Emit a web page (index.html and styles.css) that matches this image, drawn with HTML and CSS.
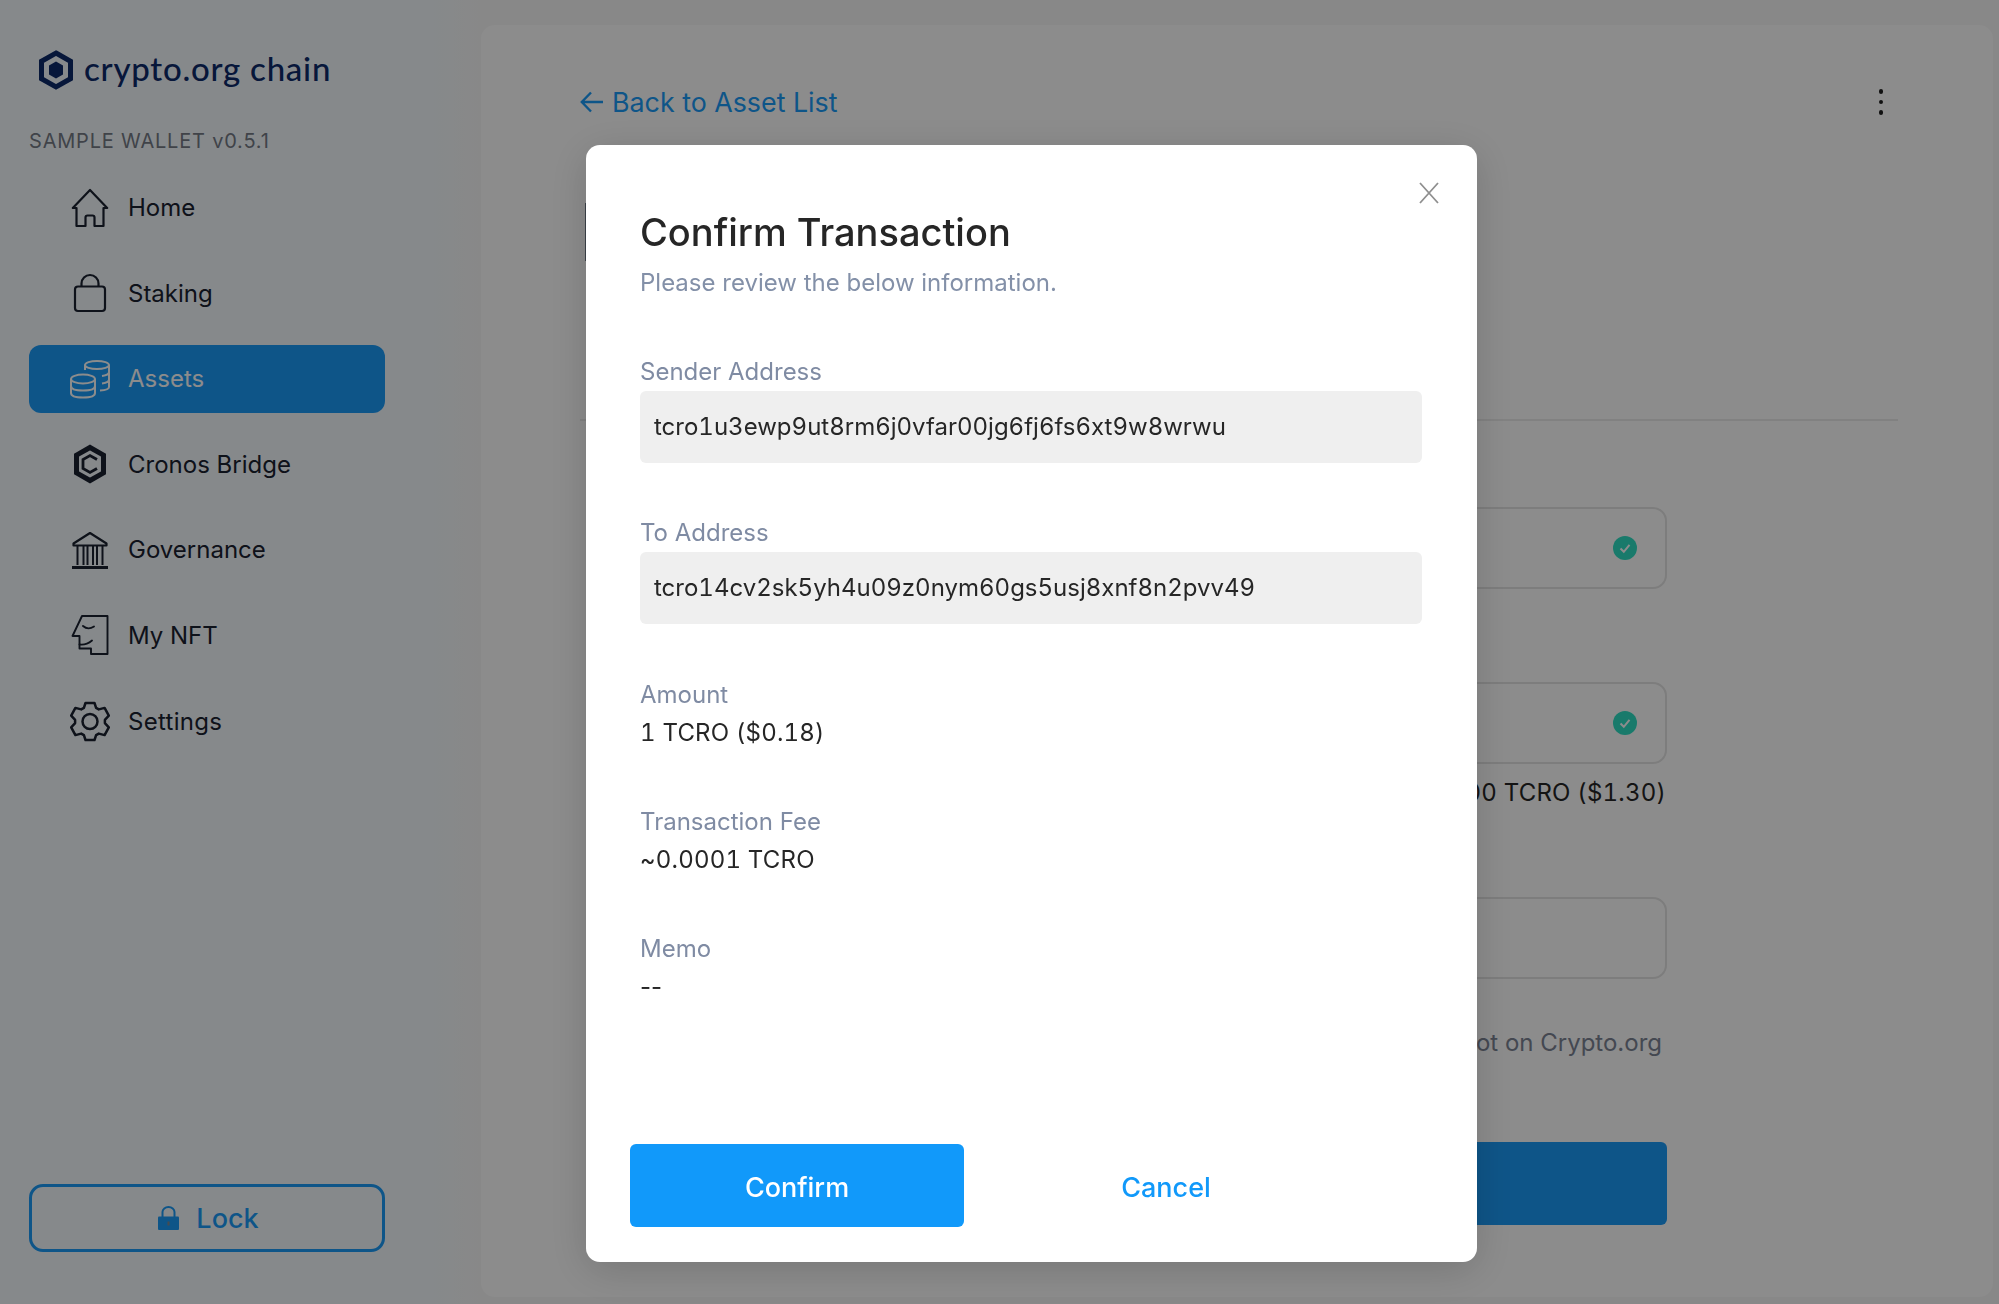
FILE: index.html
```html
<!DOCTYPE html>
<html lang="en">
<head>
<meta charset="utf-8">
<title>Crypto.org Chain Sample Wallet</title>
<link rel="stylesheet" href="styles.css">
</head>
<body>
<div class="app">
  <aside class="sidebar">
    <div class="logo">
      <svg class="logo-mark" viewBox="0 0 36 40" width="36" height="40"><path d="M18 3 32.500 11.200V28.800L18 37 3.500 28.800V11.200Z" fill="none" stroke="#0d2a6b" stroke-width="5"/><path d="M18 11.500 25 15.500V24.500L18 28.500 11 24.500V15.500Z" fill="#0d2a6b"/></svg>
      <span class="logo-text">crypto.org chain</span>
    </div>
    <div class="version">SAMPLE WALLET v0.5.1</div>
    <nav class="nav">
      <a class="nav-item">
        <svg class="nav-icon" viewBox="0 0 38 40" width="38" height="40"><path d="M19 2 1.800 20H5.500V38H14.500V29.500Q14.500 27.500 16.500 27.500H21.500Q23.500 27.500 23.500 29.500V38H32.500V20H36.200Z" fill="none" stroke="currentColor" stroke-width="2.200" stroke-linejoin="round"/></svg>
        <span>Home</span>
      </a>
      <a class="nav-item">
        <svg class="nav-icon" viewBox="0 0 38 40" width="38" height="40"><rect x="4" y="13.500" width="30" height="24.500" rx="3" fill="none" stroke="currentColor" stroke-width="2.200"/><path d="M10.500 13.500V10.500A8.500 8.500 0 0 1 27.500 10.500V13.500" fill="none" stroke="currentColor" stroke-width="2.200"/></svg>
        <span>Staking</span>
      </a>
      <a class="nav-item nav-item-active">
        <svg class="nav-icon nav-icon-coins" viewBox="0 0 42 40" width="42" height="40"><g fill="none" stroke="currentColor" stroke-width="2"><ellipse cx="28" cy="6" rx="12" ry="4"/><path d="M16 6V11M40 6V28Q40 31 31 31.500M40 13Q40 16 33 17M40 20.500Q40 23.500 33 24.500"/><ellipse cx="14" cy="20" rx="12" ry="4.500"/><path d="M2 20V34Q2 38.500 14 38.500T26 34V20M2 27Q2 31.500 14 31.500T26 27"/></g></svg>
        <span>Assets</span>
      </a>
      <a class="nav-item">
        <svg class="nav-icon" viewBox="0 0 38 40" width="38" height="40"><path d="M19 3.500 32.500 11.200V28.800L19 36.500 5.500 28.800V11.200Z" fill="none" stroke="currentColor" stroke-width="5"/><path d="M26 15.500 19 11.500 12 15.500V24.500L19 28.500 26 24.500" fill="none" stroke="currentColor" stroke-width="2.800"/></svg>
        <span>Cronos Bridge</span>
      </a>
      <a class="nav-item">
        <svg class="nav-icon" viewBox="0 0 38 40" width="38" height="40"><g fill="none" stroke="currentColor"><path d="M19 3 2.500 13.500V15.500H35.500V13.500Z" stroke-width="2.200" stroke-linejoin="round"/><path d="M6.500 16V35M12.500 16V35M16.500 16V35M22 16V35M26 16V35M31.500 16V35" stroke-width="2"/><path d="M1 37.500H37" stroke-width="3.200"/></g></svg>
        <span>Governance</span>
      </a>
      <a class="nav-item">
        <svg class="nav-icon" viewBox="0 0 38 40" width="38" height="40"><g fill="none" stroke="currentColor" stroke-width="1.900" stroke-linejoin="round" stroke-linecap="round"><path d="M36.500 1H11L1.500 21H8.500V33.500H20V39H36.500Z"/><path d="M12 11Q17 15.500 23 11.500"/><path d="M8.500 29.500Q15 30.500 21 25.500"/></g></svg>
        <span>My NFT</span>
      </a>
      <a class="nav-item">
        <svg class="nav-icon nav-icon-gear" viewBox="0 0 40 40" width="40" height="41"><g fill="none" stroke="currentColor" stroke-width="2.500" stroke-linejoin="round"><path d="M15.500 1.500H24.500L26.100 6.300 28.800 7.900 34.600 6.400 38.800 14.200 34.900 18.400V21.600L38.800 25.800 34.600 33.600 28.800 32.100 26.100 33.700 24.500 38.500H15.500L13.900 33.700 11.200 32.100 5.400 33.600 1.200 25.800 5.100 21.600V18.400L1.200 14.200 5.400 6.400 11.200 7.900 13.900 6.300Z"/><circle cx="20" cy="20" r="7.500"/></g></svg>
        <span class="nav-label-wide">Settings</span>
      </a>
    </nav>
    <button class="lock-button">
      <svg class="lock-icon" viewBox="0 0 21 24" width="21" height="24"><path d="M4.500 11V6A6 5 0 0 1 16.500 6V11" fill="none" stroke="currentColor" stroke-width="2"/><rect y="10.500" width="21" height="13.500" rx="1" fill="currentColor"/><rect x="9.500" y="15.500" width="2" height="4" fill="#86898c"/></svg>
      <span>Lock</span>
    </button>
  </aside>

  <main class="main">
    <section class="panel">
      <header class="panel-head">
        <a class="back-link">
          <svg class="back-arrow" viewBox="0 0 24 24" width="24" height="24"><path d="M23 12H2M11 2.500 1.800 12 11 21.500" fill="none" stroke="currentColor" stroke-width="2.400"/></svg>
          <span>Back to Asset List</span>
        </a>
        <div class="kebab"><i></i><i></i><i></i></div>
      </header>
      <div class="tab-bar"><div class="tab-mark"></div></div>
      <form class="form">
        <div class="input-box input-first"><span class="check"><svg viewBox="0 0 24 24" width="24" height="24"><path d="M7.500 12.500 10.800 15.800 16.500 8.800" fill="none" stroke="#fff" stroke-width="2"/></svg></span></div>
        <div class="input-box input-second"><span class="check"><svg viewBox="0 0 24 24" width="24" height="24"><path d="M7.500 12.500 10.800 15.800 16.500 8.800" fill="none" stroke="#fff" stroke-width="2"/></svg></span></div>
        <div class="form-note">00 TCRO ($1.30)</div>
        <div class="input-box input-third"></div>
        <div class="form-hint">Not on Crypto.org</div>
        <div class="form-submit"></div>
      </form>
    </section>
  </main>
</div>

<div class="overlay">
  <div class="modal">
    <svg class="modal-close" viewBox="0 0 20 22" width="20" height="22"><path d="M1 1 19 21M19 1 1 21" fill="none" stroke="#8f8f8f" stroke-width="1.800"/></svg>
    <h1 class="modal-title">Confirm Transaction</h1>
    <p class="modal-sub">Please review the below information.</p>
    <div class="group group-sender">
      <div class="label">Sender Address</div>
      <div class="address">tcro1u3ewp9ut8rm6j0vfar00jg6fj6fs6xt9w8wrwu</div>
    </div>
    <div class="group group-to">
      <div class="label">To Address</div>
      <div class="address">tcro14cv2sk5yh4u09z0nym60gs5usj8xnf8n2pvv49</div>
    </div>
    <div class="group group-amount">
      <div class="label">Amount</div>
      <div class="value">1 TCRO ($0.18)</div>
    </div>
    <div class="group group-fee">
      <div class="label">Transaction Fee</div>
      <div class="value">~0.0001 TCRO</div>
    </div>
    <div class="group group-fee">
      <div class="label">Memo</div>
      <div class="value value-empty">--</div>
    </div>
    <div class="modal-actions">
      <button class="btn-confirm">Confirm</button>
      <button class="btn-cancel">Cancel</button>
    </div>
  </div>
</div>
</body>
</html>
```

FILE: styles.css
```css
* { box-sizing: border-box; }
html, body { margin: 0; height: 100%; overflow: hidden; }
body {
  font-family: Inter, "Liberation Sans", sans-serif;
  color: #262626;
  background: #f8f8f8;
}
.app { display: flex; height: 1304px; position: relative; }

.sidebar {
  width: 481px;
  flex: none;
  display: flex;
  flex-direction: column;
  padding: 0 0 52px 29px;
  background: linear-gradient(90deg, #f4fafe 0, #f4fafe 88%, #f8f8f8 100%);
}
.logo { display: flex; align-items: center; height: 40px; margin: 50px 0 0 9px; gap: 10px; }
.logo-mark { flex: none; }
.logo-text { margin-top: -5px; font-family: Lato, sans-serif; font-size: 33px; letter-spacing: 0.75px; font-weight: 500; color: #0d2a6b; white-space: nowrap; }
.version { margin-top: 39px; font-size: 20px; line-height: 24px; letter-spacing: 0.8px; color: #757a86; }
.nav { display: flex; flex-direction: column; gap: 17.600px; margin-top: 20.500px; width: 356px; }
.nav-item {
  display: flex;
  align-items: center;
  height: 68px;
  padding-left: 42px;
  border-radius: 12px;
  font-size: 24px;
  color: #1a2130;
}
.nav-item span { margin-left: 19px; }
.nav-item .nav-label-wide { letter-spacing: 0.3px; }
.nav-icon { flex: none; }
.nav-icon-coins { margin: 0 -2px; }
.nav-icon-gear { margin: 0 -1px; }
.nav-item-active { background: #1b9bf8; color: #fff; }
.lock-button {
  margin-top: auto;
  width: 356px;
  height: 68px;
  display: flex;
  align-items: center;
  justify-content: center;
  gap: 17px;
  padding: 0 0 0 3px;
  border: 3.500px solid #1b9bf8;
  border-radius: 14px;
  background: transparent;
  color: #1b9bf8;
  font: 500 27px Inter, sans-serif;
}

.main { flex: 1; min-width: 0; padding: 25px 6px 7px 0; }
.panel { height: 100%; background: #fff; border-radius: 14px; padding: 0 95px 0 99px; }
.panel-head { display: flex; align-items: center; justify-content: space-between; height: 154px; }
.back-link { display: flex; align-items: center; gap: 8px; color: #1b9bf8; font-size: 26.800px; font-weight: 400; }
.back-arrow { flex: none; }
.kebab { display: flex; flex-direction: column; gap: 6px; margin-right: 15px; }
.kebab i { display: block; width: 4.500px; height: 4.500px; border-radius: 50%; background: #202020; }
.tab-bar { height: 242px; border-bottom: 2px solid #ececec; padding-top: 24px; }
.tab-mark { width: 2px; height: 58px; margin-left: 5px; background: #6e7785; }

.form { width: 1080px; margin-left: 7px; display: flex; flex-direction: column; align-items: flex-end; }
.input-box {
  width: 100%;
  height: 82px;
  display: flex;
  align-items: center;
  justify-content: flex-end;
  padding-right: 28px;
  border: 2px solid #e4e4e4;
  border-radius: 14px;
}
.input-first { margin-top: 86px; }
.input-second { margin-top: 93px; }
.input-third { margin-top: 89px; }
.check { display: block; width: 24px; height: 24px; border-radius: 50%; background: #2fdfc4; }
.check svg { display: block; }
.form-note { margin-top: 14px; margin-right: 1px; font-size: 24px; line-height: 30px; letter-spacing: 0.2px; font-variant-numeric: tabular-nums; color: #262626; }
.form-hint { margin-top: 49px; margin-right: 5px; font-size: 24px; line-height: 30px; color: #7c8494; }
.form-submit { width: 100%; height: 83px; margin-top: 84px; background: #1b9bf8; border-radius: 6px; }

.overlay {
  position: fixed;
  inset: 0;
  display: flex;
  align-items: flex-start;
  padding: 145px 0 0 586px;
  background: rgba(0, 0, 0, 0.45);
}
.modal {
  position: relative;
  width: 891px;
  height: 1117px;
  display: flex;
  flex-direction: column;
  padding: 64px 55px 35px 54px;
  background: #fff;
  border-radius: 14px;
  box-shadow: 0 8px 40px rgba(0, 0, 0, 0.16);
}
.modal-close { position: absolute; top: 37px; right: 38px; }
.modal-title { margin: 0; font-size: 38px; line-height: 46px; font-weight: 500; color: #262626; }
.modal-sub { margin: 13px 0 0; font-size: 24px; line-height: 30px; color: #8390a8; }
.label { font-size: 24px; line-height: 28px; color: #7f8ba3; }
.address {
  height: 72px;
  display: flex;
  align-items: center;
  margin-top: 5px;
  padding: 0 0 1px 14px;
  background: #efefef;
  border-radius: 6px;
  font-size: 24px;
  font-variant-numeric: tabular-nums;
  color: #262626;
}
.value { margin-top: 9px; font-size: 24px; line-height: 30px; letter-spacing: 0.2px; font-variant-numeric: tabular-nums; color: #262626; }
.value-empty { letter-spacing: 0; font-variant-numeric: normal; }
.group-sender { margin-top: 60px; }
.group-to { margin-top: 56px; }
.group-amount { margin-top: 57px; }
.group-fee { margin-top: 60px; }
.modal-actions { margin-top: auto; margin-left: -10px; display: flex; align-items: center; }
.btn-confirm {
  width: 334px;
  height: 83px;
  padding-top: 5px;
  border: 0;
  border-radius: 6px;
  background: #1199fa;
  color: #fff;
  font: 500 27px Inter, sans-serif;
}
.btn-cancel {
  width: 404px;
  height: 83px;
  padding-top: 5px;
  border: 0;
  background: none;
  color: #1199fa;
  font: 500 27px Inter, sans-serif;
}
```
